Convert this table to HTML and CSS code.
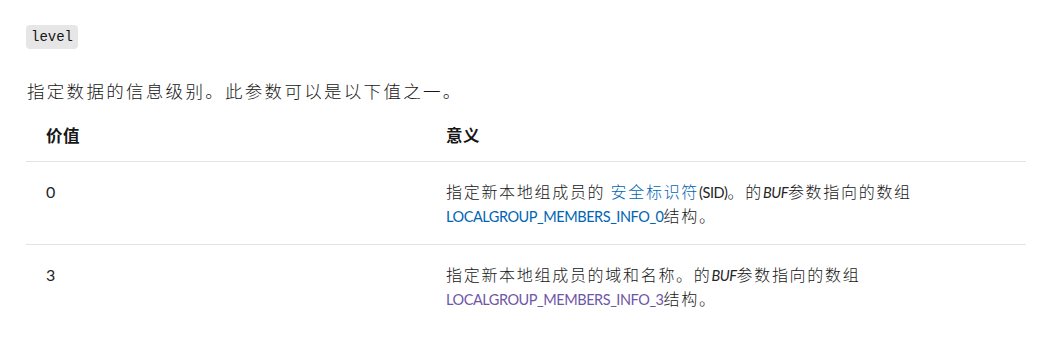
FILE: index.html
```html
<!DOCTYPE html>
<html lang="zh-CN">
<head>
<meta charset="utf-8">
<title>level</title>
<link rel="stylesheet" href="styles.css">
</head>
<body>
<main class="content">
  <p class="param"><code class="code">level</code></p>
  <p class="desc">指定数据的信息级别。此参数可以是以下值之一。</p>
  <table class="values">
    <thead>
      <tr><th class="col-value">价值</th><th class="col-meaning">意义</th></tr>
    </thead>
    <tbody>
      <tr>
        <td><span class="lat num">0</span></td>
        <td>指定新本地组成员的 <a class="link" href="#">安全标识符</a><span class="lat">(SID)</span>。的<em class="lat">BUF</em>参数指向的数组<br><a class="link lat" href="#">LOCALGROUP_MEMBERS_INFO_0</a>结构。</td>
      </tr>
      <tr>
        <td><span class="lat num">3</span></td>
        <td>指定新本地组成员的域和名称。的<em class="lat">BUF</em>参数指向的数组<br><a class="link visited lat" href="#">LOCALGROUP_MEMBERS_INFO_3</a>结构。</td>
      </tr>
    </tbody>
  </table>
</main>
</body>
</html>
```
FILE: styles.css
```css
html, body {
  margin: 0;
  padding: 0;
  background: #ffffff;
}
body {
  color: #171717;
  font-family: "Noto Sans CJK SC", sans-serif;
  font-size: 17px;
  font-weight: 300;
  line-height: 24px;
}
.content {
  padding: 25px 15px 0 26px;
}
.param {
  margin: 0;
  height: 24px;
}
.code {
  display: inline-block;
  vertical-align: top;
  background: #e6e6e6;
  border-radius: 4px;
  padding: 0 5px;
  font-family: "Liberation Mono", "DejaVu Sans Mono", monospace;
  font-size: 14px;
  font-weight: 400;
  line-height: 24px;
  color: #171717;
}
.desc {
  margin: 30px 0 0 1px;
  font-size: 17.5px;
  letter-spacing: 2.3px;
}
.values {
  width: 1000px;
  border-collapse: collapse;
  margin-top: 2px;
}
.values th,
.values td {
  text-align: left;
  vertical-align: top;
  padding: 17px 20px 17px;
}
.values td {
  font-size: 16px;
  letter-spacing: 1.7px;
}
.values th {
  font-weight: 700;
  font-size: 16.5px;
  letter-spacing: 0.5px;
  padding-top: 18px;
  padding-bottom: 14px;
  border-bottom: 1px solid #e3e3e3;
}
.col-value {
  width: 40%;
}
.values tbody tr {
  border-bottom: 1px solid #e3e3e3;
}
.values tbody tr:last-child {
  border-bottom: none;
}
.lat {
  font-family: Lato, "Noto Sans CJK SC", sans-serif;
  font-size: 14.5px;
  font-weight: 400;
  line-height: 14px;
  letter-spacing: -0.45px;
  color: #242424;
}
.num {
  font-size: 16px;
  letter-spacing: 0;
}
em.lat {
  font-style: italic;
}
.link {
  color: #0065b3;
  text-decoration: none;
}
.visited {
  color: #7056a6;
}
```
